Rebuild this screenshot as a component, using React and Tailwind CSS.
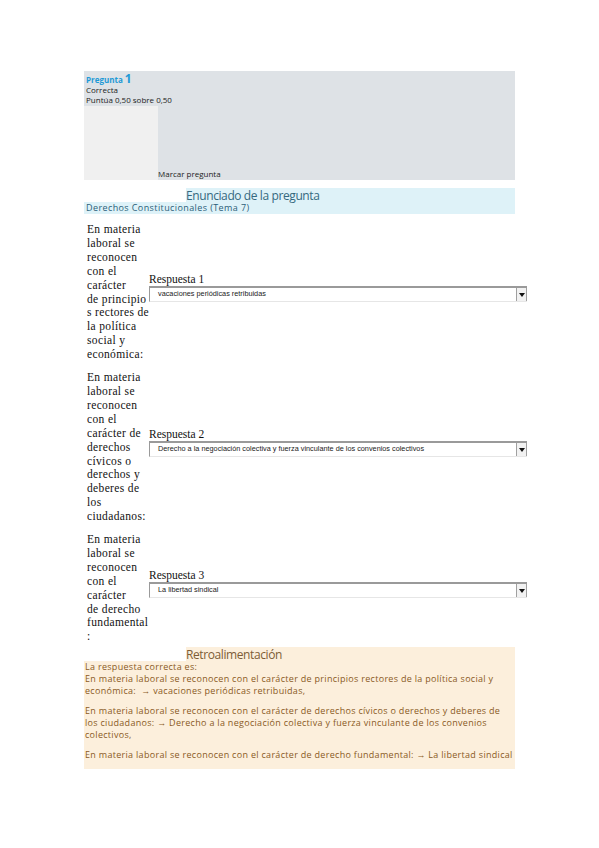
import React from "react";

const serif = { fontFamily: '"Liberation Serif", serif' };

const questions = [
  {
    lines: ["En materia", "laboral se", "reconocen", "con el", "carácter", "de principio", "s rectores de", "la política", "social y", "económica:"],
    label: "Respuesta 1",
    value: "vacaciones periódicas retribuidas",
  },
  {
    lines: ["En materia", "laboral se", "reconocen", "con el", "carácter de", "derechos", "cívicos o", "derechos y", "deberes de", "los", "ciudadanos:"],
    label: "Respuesta 2",
    value: "Derecho a la negociación colectiva y fuerza vinculante de los convenios colectivos",
  },
  {
    lines: ["En materia", "laboral se", "reconocen", "con el", "carácter", "de derecho", "fundamental", ":"],
    label: "Respuesta 3",
    value: "La libertad sindical",
  },
];

const Select = ({ value }) => (
  <div className="flex h-[16px] w-[378px] items-stretch border-t-2 border-l border-[#9a9a9a] border-b border-b-[#e6e6e6] bg-white">
    <div className="flex-1 truncate pl-[8px] text-[7.3px] leading-[12px] text-[#222] font-['Liberation_Sans',sans-serif]">
      {value}
    </div>
    <div className="flex w-[11px] items-center justify-center border-l border-r border-[#a0a0a0] bg-[#f2f2f2]">
      <div className="h-0 w-0 border-x-[3px] border-t-[4px] border-x-transparent border-t-[#111]" />
    </div>
  </div>
);

export default function App() {
  return (
    <div className="min-h-[848px] w-[599px] bg-white pl-[84px] pt-[71px] font-['Open_Sans',sans-serif]">
      <div className="flex h-[109px] w-[431px] flex-col bg-[#dee2e6] pl-[2px]">
        <div className="h-[14px] text-[8px] font-bold leading-[16px] text-[#1e9ad6]">
          Pregunta <span className="text-[12px]">1</span>
        </div>
        <div className="h-[10px] text-[8px] leading-[10px] text-[#222]">Correcta</div>
        <div className="h-[11px] text-[8px] leading-[10px] text-[#222]">Puntúa 0,50 sobre 0,50</div>
        <div className="flex flex-1 -ml-[2px]">
          <div className="w-[74px] bg-[#f0f0f0]" />
          <div className="self-end pb-[1px] text-[8px] leading-[10px] text-[#222]">Marcar pregunta</div>
        </div>
      </div>

      <div className="mt-[8px]">
        <div className="ml-[102px] h-[14px] w-[329px] bg-[#def2f8] text-[12px] leading-[16px] tracking-[-0.4px] text-[#35697f]">
          Enunciado de la pregunta
        </div>
        <div className="h-[12px] w-[431px] bg-[#def2f8] pl-[2px] text-[9px] leading-[12px] tracking-[0.4px] text-[#2b5f78]">
          Derechos Constitucionales (Tema 7)
        </div>
      </div>

      <div className="mt-[9px] flex flex-col gap-[9px] pl-[3px]">
        {questions.map((q) => (
          <div key={q.label} className="flex items-center">
            <div className="w-[62px] whitespace-nowrap text-[11.5px] leading-[13.9px] tracking-[0.35px] text-[#111]" style={serif}>
              {q.lines.map((l, i) => (
                <div key={i}>{l}</div>
              ))}
            </div>
            <div className="pb-[10px]">
              <div className="text-[11.5px] leading-[13px] text-[#111]" style={serif}>
                {q.label}
              </div>
              <Select value={q.value} />
            </div>
          </div>
        ))}
      </div>

      <div className="mt-[3px]">
        <div className="ml-[102px] h-[14px] w-[329px] bg-[#fcefdc] text-[12px] leading-[16px] tracking-[-0.4px] text-[#7d5d36]">
          Retroalimentación
        </div>
        <div className="w-[431px] whitespace-nowrap bg-[#fcefdc] pb-[8px] pl-[1px] text-[9px] leading-[12px] tracking-[0.3px] text-[#8a5a1e]">
          <p>La respuesta correcta es:</p>
          <p>
            En materia laboral se reconocen con el carácter de principios rectores de la política social y
            <br />
            económica: &nbsp;→ vacaciones periódicas retribuidas,
          </p>
          <p className="mt-[8px]">
            En materia laboral se reconocen con el carácter de derechos cívicos o derechos y deberes de
            <br />
            los ciudadanos: → Derecho a la negociación colectiva y fuerza vinculante de los convenios
            <br />
            colectivos,
          </p>
          <p className="mt-[8px]">
            En materia laboral se reconocen con el carácter de derecho fundamental: → La libertad sindical
          </p>
        </div>
      </div>
    </div>
  );
}
